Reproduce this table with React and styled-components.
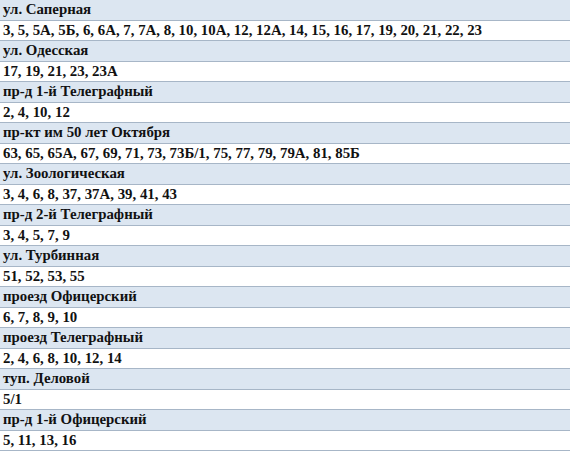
import React from 'react';
import styled, { createGlobalStyle } from 'styled-components';

const GlobalStyle = createGlobalStyle`
  html, body {
    margin: 0;
    padding: 0;
    background: #ffffff;
  }
`;

const Table = styled.div`
  width: 570px;
  display: flex;
  flex-direction: column;
  font-family: "Liberation Serif", "Times New Roman", serif;
  font-weight: bold;
  font-size: 14.85px;
  color: #111111;
`;

const Row = styled.div`
  box-sizing: border-box;
  height: 20.5px;
  line-height: 19px;
  padding: 0 0 0 3px;
  white-space: nowrap;
  overflow: hidden;
  background: ${({ $head }) => ($head ? '#dce6f1' : '#ffffff')};
  border-bottom: 1px solid #a7b6c7;
`;

const streets = [
  ['ул. Саперная', '3, 5, 5А, 5Б, 6, 6А, 7, 7А, 8, 10, 10А, 12, 12А, 14, 15, 16, 17, 19, 20, 21, 22, 23'],
  ['ул. Одесская', '17, 19, 21, 23, 23А'],
  ['пр-д 1-й Телеграфный', '2, 4, 10, 12'],
  ['пр-кт им 50 лет Октября', '63, 65, 65А, 67, 69, 71, 73, 73Б/1, 75, 77, 79, 79А, 81, 85Б'],
  ['ул. Зоологическая', '3, 4, 6, 8, 37, 37А, 39, 41, 43'],
  ['пр-д 2-й Телеграфный', '3, 4, 5, 7, 9'],
  ['ул. Турбинная', '51, 52, 53, 55'],
  ['проезд Офицерский', '6, 7, 8, 9, 10'],
  ['проезд Телеграфный', '2, 4, 6, 8, 10, 12, 14'],
  ['туп. Деловой', '5/1'],
  ['пр-д 1-й Офицерский', '5, 11, 13, 16'],
];

export default function App() {
  return (
    <>
      <GlobalStyle />
      <Table>
        {streets.map(([name, houses]) => (
          <React.Fragment key={name}>
            <Row $head>{name}</Row>
            <Row>{houses}</Row>
          </React.Fragment>
        ))}
      </Table>
    </>
  );
}
